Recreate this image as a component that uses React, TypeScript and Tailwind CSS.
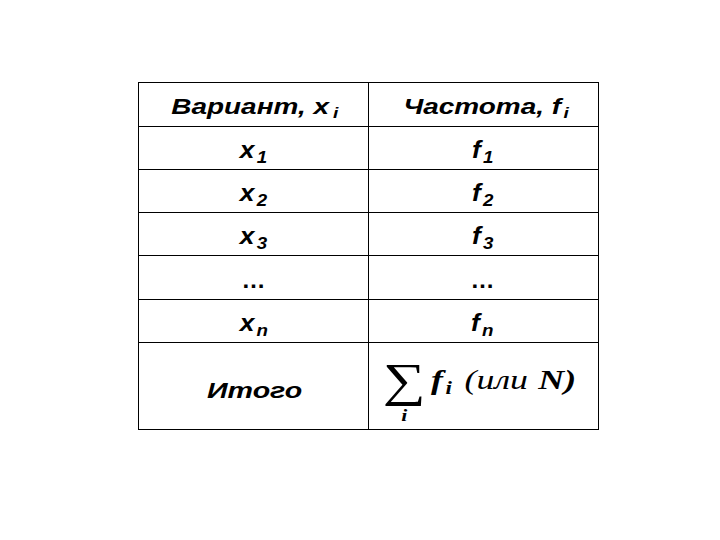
const sans = "font-['Liberation_Sans',Arial,sans-serif]";
const serif = "font-['Liberation_Serif','Times_New_Roman',serif]";

type Row = { x: string; f: string; h: string };

const rows: Row[] = [
  { x: "1", f: "1", h: "h-[43px]" },
  { x: "2", f: "2", h: "h-[43px]" },
  { x: "3", f: "3", h: "h-[43px]" },
  { x: "", f: "", h: "h-[44px]" },
  { x: "n", f: "n", h: "h-[43px]" },
];

function Sym({ base, sub }: { base: string; sub: string }) {
  return (
    <span className="inline-flex scale-x-[1.1] items-baseline">
      <span>{base}</span>
      <span className="relative top-[5px] ml-[2px] text-[17px]">{sub}</span>
    </span>
  );
}

export default function App() {
  return (
    <div className={`h-[540px] w-[720px] bg-white pl-[138px] pt-[82px] text-black ${sans}`}>
      <div className="w-[461px] border border-black">
        {/* header */}
        <div className="flex h-[44px] border-b border-black text-[22px] font-bold italic">
          <div className="flex w-[230px] items-center justify-center border-r border-black pt-[3px] pl-[3px]">
            <span className="inline-flex scale-x-[1.27] items-baseline">
              Вариант, x
              <span className="relative top-[4px] ml-[3px] text-[15px]">i</span>
            </span>
          </div>
          <div className="flex flex-1 items-center justify-center pt-[3px] pl-[5px]">
            <span className="inline-flex scale-x-[1.27] items-baseline">
              Частота, f
              <span className="relative top-[4px] ml-[2px] text-[15px]">i</span>
            </span>
          </div>
        </div>

        {rows.map((r, i) => (
          <div
            key={i}
            className={`flex ${r.h} border-b border-black text-[24px] font-bold italic`}
          >
            <div className="flex w-[230px] items-center justify-center border-r border-black pt-[4px]">
              {r.x ? <Sym base="x" sub={r.x} /> : <span className="not-italic">…</span>}
            </div>
            <div className="flex flex-1 items-center justify-center pt-[4px] pr-[2px]">
              {r.f ? <Sym base="f" sub={r.f} /> : <span className="not-italic">…</span>}
            </div>
          </div>
        ))}

        {/* total */}
        <div className="flex h-[86px]">
          <div className="flex w-[230px] items-center justify-center border-r border-black pt-[8px] pl-[2px] text-[22px] font-bold italic">
            <span className="scale-x-[1.3]">Итого</span>
          </div>
          <div className={`flex flex-1 items-center justify-center pt-[12px] pr-[8px] ${serif}`}>
            <span className="inline-flex scale-x-[1.28] items-start">
              <span className="inline-flex flex-col items-center">
                <span className="text-[47px] leading-[38px]">∑</span>
                <span className="mt-[10px] text-[17px] font-bold italic leading-[14px]">i</span>
              </span>
              <span className="ml-[4px] mt-[3px] inline-flex items-baseline text-[28px] italic leading-[32px]">
                <span className="font-bold">f</span>
                <span className="relative top-[5px] ml-[2px] text-[18px] font-bold">i</span>
                <span className="ml-[10px]">(или</span>
                <span className="ml-[8px] font-bold">N)</span>
              </span>
            </span>
          </div>
        </div>
      </div>
    </div>
  );
}
